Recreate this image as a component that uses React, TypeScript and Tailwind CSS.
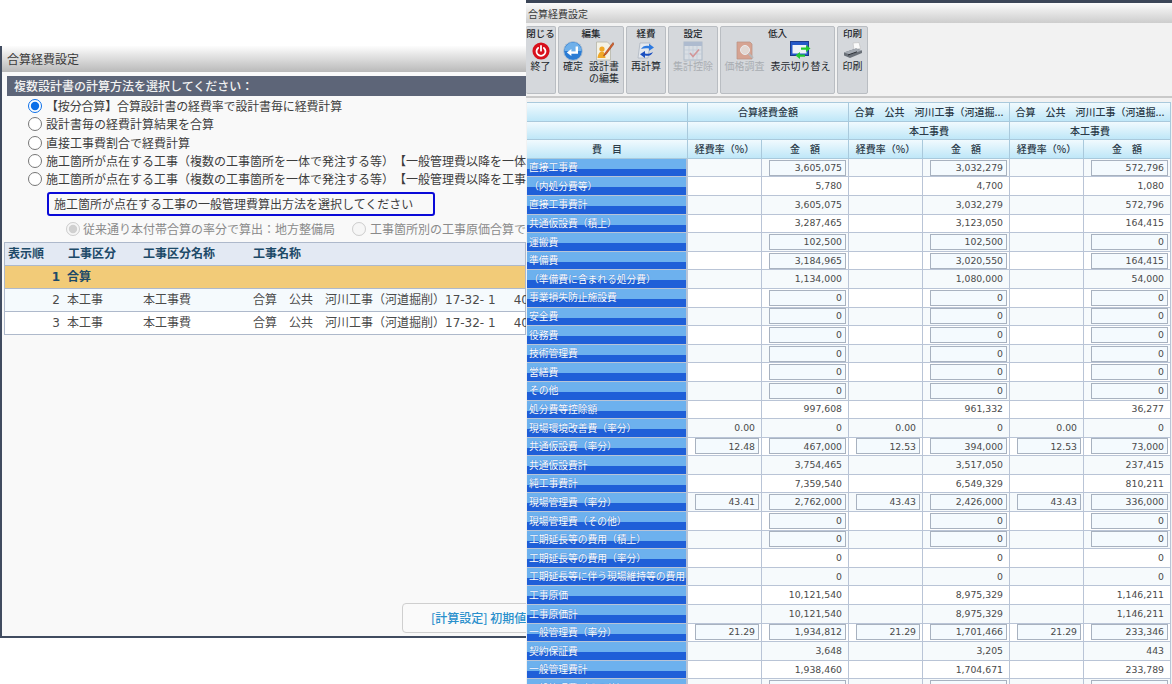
import React from 'react';

type Cell = { v: string; input?: boolean };
type Row = { label: string; cells: Cell[] };

const t = (v: string): Cell => ({ v });
const i = (v: string): Cell => ({ v, input: true });
const e: Cell = { v: '' };

const rows: Row[] = [
  { label: '直接工事費', cells: [e, i('3,605,075'), e, i('3,032,279'), e, i('572,796')] },
  { label: '\uFF08内処分費等\uFF09', cells: [e, t('5,780'), e, t('4,700'), e, t('1,080')] },
  { label: '直接工事費計', cells: [e, t('3,605,075'), e, t('3,032,279'), e, t('572,796')] },
  { label: '共通仮設費\uFF08積上\uFF09', cells: [e, t('3,287,465'), e, t('3,123,050'), e, t('164,415')] },
  { label: '運搬費', cells: [e, i('102,500'), e, i('102,500'), e, i('0')] },
  { label: '準備費', cells: [e, i('3,184,965'), e, i('3,020,550'), e, i('164,415')] },
  { label: '\uFF08準備費に含まれる処分費\uFF09', cells: [e, t('1,134,000'), e, t('1,080,000'), e, t('54,000')] },
  { label: '事業損失防止施設費', cells: [e, i('0'), e, i('0'), e, i('0')] },
  { label: '安全費', cells: [e, i('0'), e, i('0'), e, i('0')] },
  { label: '役務費', cells: [e, i('0'), e, i('0'), e, i('0')] },
  { label: '技術管理費', cells: [e, i('0'), e, i('0'), e, i('0')] },
  { label: '営繕費', cells: [e, i('0'), e, i('0'), e, i('0')] },
  { label: 'その他', cells: [e, i('0'), e, i('0'), e, i('0')] },
  { label: '処分費等控除額', cells: [e, t('997,608'), e, t('961,332'), e, t('36,277')] },
  { label: '現場環境改善費\uFF08率分\uFF09', cells: [t('0.00'), t('0'), t('0.00'), t('0'), t('0.00'), t('0')] },
  { label: '共通仮設費\uFF08率分\uFF09', cells: [i('12.48'), i('467,000'), i('12.53'), i('394,000'), i('12.53'), i('73,000')] },
  { label: '共通仮設費計', cells: [e, t('3,754,465'), e, t('3,517,050'), e, t('237,415')] },
  { label: '純工事費計', cells: [e, t('7,359,540'), e, t('6,549,329'), e, t('810,211')] },
  { label: '現場管理費\uFF08率分\uFF09', cells: [i('43.41'), i('2,762,000'), i('43.43'), i('2,426,000'), i('43.43'), i('336,000')] },
  { label: '現場管理費\uFF08その他\uFF09', cells: [e, i('0'), e, i('0'), e, i('0')] },
  { label: '工期延長等の費用\uFF08積上\uFF09', cells: [e, i('0'), e, i('0'), e, i('0')] },
  { label: '工期延長等の費用\uFF08率分\uFF09', cells: [e, t('0'), e, t('0'), e, t('0')] },
  { label: '工期延長等に伴う現場維持等の費用', cells: [e, t('0'), e, t('0'), e, t('0')] },
  { label: '工事原価', cells: [e, t('10,121,540'), e, t('8,975,329'), e, t('1,146,211')] },
  { label: '工事原価計', cells: [e, t('10,121,540'), e, t('8,975,329'), e, t('1,146,211')] },
  { label: '一般管理費\uFF08率分\uFF09', cells: [i('21.29'), i('1,934,812'), i('21.29'), i('1,701,466'), i('21.29'), i('233,346')] },
  { label: '契約保証費', cells: [e, t('3,648'), e, t('3,205'), e, t('443')] },
  { label: '一般管理費計', cells: [e, t('1,938,460'), e, t('1,704,671'), e, t('233,789')] },
  { label: '一般管理費\uFF08その他\uFF09', cells: [e, i('0'), e, i('0'), e, i('0')] },
];

const radios = [
  { text: '【按分合算】合算設計書の経費率で設計書毎に経費計算' },
  { text: '設計書毎の経費計算結果を合算' },
  { text: '直接工事費割合で経費計算' },
  { text: '施工箇所が点在する工事\uFF08複数の工事箇所を一体で発注する等\uFF09', note: '【一般管理費以降を一体' },
  { text: '施工箇所が点在する工事\uFF08複数の工事箇所を一体で発注する等\uFF09', note: '【一般管理費以降を工事' },
];

const koji = '合算\u3000公共\u3000河川工事\uFF08河道掘削\uFF0917-32- 1';
const kojiHead = '合算\u3000公共\u3000河川工事\uFF08河道掘...';

const PowerIcon = () => (
  <svg width="18" height="18" viewBox="0 0 20 20">
    <circle cx="10" cy="10" r="9.500" fill="#d8101c" />
    <path d="M6.800 6.600a5 5 0 1 0 6.400 0" fill="none" stroke="#fff" strokeWidth="2" strokeLinecap="round" />
    <path d="M10 4.400v5.200" stroke="#fff" strokeWidth="2" strokeLinecap="round" />
  </svg>
);

const EnterIcon = () => (
  <svg width="20" height="20" viewBox="0 0 20 20">
    <circle cx="10" cy="10" r="9.400" fill="#2a7bd4" stroke="#b8c4d0" strokeWidth="1" />
    <path d="M1.500 10a8.500 8.500 0 0 1 17 0z" fill="#6fb0ea" />
    <path d="M13.800 5.500v6H7.500" fill="none" stroke="#fff" strokeWidth="2.400" />
    <path d="M8.400 8v7l-4.600-3.500z" fill="#fff" />
  </svg>
);

const EditDocIcon = () => (
  <svg width="20" height="20" viewBox="0 0 20 20">
    <path d="M2.500 1h11l3 3v15h-14z" fill="#f4f2e6" stroke="#b5b5a8" strokeWidth="0.800" />
    <circle cx="8" cy="8" r="2.600" fill="#f0a828" />
    <path d="M3.500 17c.5-4.500 2.500-6.500 4.500-6.500s3 2 3.500 6.500z" fill="#f0a828" />
    <path d="M19 1.500 11 12l-1.500 3 2.800-1.800L20 3z" fill="#d8602a" stroke="#8a3a1a" strokeWidth="0.500" />
  </svg>
);

const RecalcIcon = () => (
  <svg width="20" height="20" viewBox="0 0 20 20">
    <path d="M4 2h10l-2 15H2z" fill="#e4e8ee" stroke="#a8b0bc" strokeWidth="0.700" />
    <path d="M5 8c1.500-3 5-4 8-3V2.800l5 3.700-5 3.200V7.500c-3-.7-5.500-.2-8 .5z" fill="#2e7ae0" />
    <path d="M17 11c-1.500 3.500-5 4.500-8 3.500V17l-5-3.700 5-3.200v2.400c3 .7 5.500.2 8-1.500z" fill="#1a4fc0" />
  </svg>
);

const CalendarIcon = () => (
  <svg width="20" height="20" viewBox="0 0 20 20" opacity="0.450">
    <rect x="1" y="1" width="18" height="18" fill="#dfe6ee" stroke="#7f96b0" strokeWidth="1" />
    <rect x="1" y="1" width="18" height="4" fill="#7f9ac0" />
    <path d="M1 9h18M1 13h18M6 5v14M10 5v14M14 5v14" stroke="#9fb4cc" strokeWidth="0.600" />
    <path d="M7 12l3 3.500 6-7" fill="none" stroke="#d04848" strokeWidth="1.600" />
  </svg>
);

const PriceIcon = () => (
  <svg width="20" height="20" viewBox="0 0 20 20" opacity="0.500">
    <path d="M2 1h13l2 2v15H2z" fill="#d8704a" stroke="#a04a2a" strokeWidth="0.700" />
    <circle cx="10" cy="9" r="4.500" fill="#f0d8cc" stroke="#fff" strokeWidth="1" />
    <path d="M13.500 12.500 18 17" stroke="#9a9a9a" strokeWidth="1.800" />
  </svg>
);

const SwitchIcon = () => (
  <svg width="21" height="20" viewBox="0 0 21 20">
    <rect x="0.500" y="0.500" width="18" height="14" fill="#2458c8" stroke="#1a3a8a" strokeWidth="1" />
    <rect x="2.500" y="4" width="14" height="8.500" fill="#eef2f8" />
    <path d="M11 6.500h5V4l4.500 3.500L16 11V8.800h-5z" fill="#22c832" />
    <path d="M15 13.500h-5V11l-4.500 3.500L10 18v-2.200h5z" fill="#22c832" />
  </svg>
);

const PrinterIcon = () => (
  <svg width="20" height="18" viewBox="0 0 20 18">
    <path d="M10 1l6-.5 1.500 6-6.500 1z" fill="#fafafa" stroke="#bdbdbd" strokeWidth="0.600" />
    <path d="M1 10.500 13 6.500l6 2v2.500L7 16l-6-2.500z" fill="#6a7078" />
    <path d="M1 10.500 13 6.500l6 2L7 12.500z" fill="#a4aab2" />
    <path d="M5 13l9-3.200" stroke="#2a2e34" strokeWidth="1" />
  </svg>
);

function ToolButton({ icon, label, disabled }: { icon: React.ReactNode; label: React.ReactNode; disabled?: boolean }) {
  return (
    <div className="flex flex-col items-center">
      <div className="h-[19px] flex items-center justify-center">{icon}</div>
      <div className={`text-[10px] leading-[12px] text-center whitespace-nowrap ${disabled ? 'text-[#a9adb2]' : 'text-[#23272c]'}`}>{label}</div>
    </div>
  );
}

function ToolGroup({ title, width, children, className }: { title: string; width: string; children: React.ReactNode; className?: string }) {
  return (
    <div className={`${width} h-[68px] shrink-0 bg-[#d5d8dc] border border-[#b9bdc2] rounded-[2px] flex flex-col items-center ${className ?? ''}`}>
      <div className="text-[9.5px] leading-[12px] h-[14px] font-medium text-[#23272c] whitespace-nowrap">{title}</div>
      <div className="flex justify-center gap-[6px]">{children}</div>
    </div>
  );
}

const headCell = 'border-r border-b border-[#a9c9dc] bg-[linear-gradient(#f1fafe,#bfe7f8)] flex items-center justify-center text-[10px] font-medium text-[#2a3a48] whitespace-nowrap overflow-hidden';

function DataCell({ cell, amount, shaded }: { cell: Cell; amount: boolean; shaded: boolean }) {
  return (
    <div className={`${amount ? 'w-[87px]' : 'w-[74px]'} h-full shrink-0 border-r border-b border-[#b9c4d6] ${shaded ? 'bg-[#f6fafc]' : 'bg-white'} flex items-center justify-end pl-[7px] pr-[2px] text-[9.3px] text-[#4a4a4a] font-['DejaVu_Sans',sans-serif]`}>
      {cell.input ? (
        <div className="w-full h-[16px] border border-[#a8b2c0] bg-[#f4fafe] flex items-center justify-end pr-[3px]">{cell.v}</div>
      ) : (
        <span className="pr-[4px]">{cell.v}</span>
      )}
    </div>
  );
}

export default function App() {
  return (
    <div className="relative w-[1172px] h-[684px] overflow-hidden bg-white font-['Noto_Sans_CJK_JP','Noto_Sans',sans-serif]">
      {/* left window */}
      <div className="absolute left-0 top-[46px] w-[526px] h-[592px] bg-[#f9f9f9] border-l-2 border-b-2 border-[#414c60] flex flex-col overflow-hidden">
        <div className="h-[26px] shrink-0 bg-[linear-gradient(#fdfdfd,#b9b9b9)] pl-[5px] flex items-center text-[12px] text-[#3a3a3a]">合算経費設定</div>
        <div className="mt-[4px] ml-[5px] h-[20px] shrink-0 bg-[#5d6578] pl-[7px] flex items-center text-[12px] font-medium text-[#f2f2f2] whitespace-nowrap">複数設計書の計算方法を選択してください：</div>
        <div className="mt-[1px] ml-[26px] flex flex-col">
          {radios.map((r, n) => (
            <label key={n} className={`h-[18.3px] flex items-center whitespace-nowrap text-[12px] text-[#3d3d3d] ${n === 0 ? 'tracking-[-0.16px]' : ''}`}>
              <input type="radio" name="calc" defaultChecked={n === 0} className="w-[14px] h-[14px] m-0 mr-[4px] shrink-0 accent-[#0b6fe8]" />
              <span className="shrink-0">{r.text}</span>
              {r.note && <span className="shrink-0">{r.note}</span>}
            </label>
          ))}
        </div>
        <div className="mt-[4px] ml-[45px] w-[388px] h-[24px] shrink-0 border-2 border-[#0a0ad8] rounded-[3px] pl-[5px] flex items-center text-[12px] text-[#3d3d3d] whitespace-nowrap">施工箇所が点在する工事の一般管理費算出方法を選択してください</div>
        <div className="mt-[3px] ml-[64px] h-[20px] shrink-0 flex items-center text-[12px] text-[#8a8a8a] whitespace-nowrap">
          <input type="radio" name="mgmt" disabled defaultChecked className="w-[14px] h-[14px] m-0 mr-[3px] shrink-0" />
          <span className="shrink-0">従来通り本付帯合算の率分で算出：地方整備局</span>
          <input type="radio" name="mgmt" disabled className="w-[14px] h-[14px] m-0 ml-[17px] mr-[4px] shrink-0" />
          <span className="shrink-0">工事箇所別の工事原価合算で算出</span>
        </div>
        <div className="mt-[3px] ml-[2px] border border-b-0 border-[#aeb9cb] font-['DejaVu_Sans','Noto_Sans_CJK_JP',sans-serif] text-[12px] whitespace-nowrap">
          <div className="h-[23px] bg-[#e3e9f3] border-b border-[#aeb9cb] flex items-center font-bold text-[#1d4a68]">
            <span className="w-[63px] shrink-0 pl-[3px]">表示順</span>
            <span className="w-[75px] shrink-0">工事区分</span>
            <span className="w-[110px] shrink-0">工事区分名称</span>
            <span className="shrink-0">工事名称</span>
          </div>
          <div className="h-[23px] bg-[#f2cb78] border-b border-[#aeb9cb] flex items-center font-bold text-[#1d4a68]">
            <span className="w-[55px] shrink-0 text-right">1</span>
            <span className="ml-[7px] shrink-0">合算</span>
          </div>
          {[2, 3].map((n) => (
            <div key={n} className={`h-[23px] border-b border-[#aeb9cb] flex items-center text-[#4a4a4a] ${n === 2 ? 'bg-[#f5fafd]' : 'bg-white'}`}>
              <span className="w-[55px] shrink-0 text-right">{n}</span>
              <span className="w-[76px] shrink-0 ml-[7px]">本工事</span>
              <span className="w-[110px] shrink-0">本工事費</span>
              <span className="shrink-0">{koji}</span>
              <span className="ml-[18px] shrink-0">40</span>
            </div>
          ))}
        </div>
        <div className="flex-1" />
        <div className="mb-[3px] ml-[400px] w-[200px] h-[30px] shrink-0 border border-[#cfcfcf] rounded-[4px] bg-[#fafafa] pl-[28px] flex items-center text-[12px] font-medium text-[#2a90cc] whitespace-nowrap">[計算設定] 初期値</div>
      </div>

      {/* right window */}
      <div className="absolute left-[526px] top-0 w-[646px] h-[684px] overflow-hidden bg-[#f2f2f2] flex flex-col">
        <div className="h-[3px] shrink-0 bg-[#3b4557]" />
        <div className="h-[20px] shrink-0 bg-[linear-gradient(#fbfbfb,#cdcdcd)] pl-[2px] flex items-center text-[10px] text-[#3a3a3a]">合算経費設定</div>
        <div className="h-[75px] shrink-0 pt-[3px] flex gap-[2px] border-b-2 border-[#c9c9c9]">
          <ToolGroup title="閉じる" width="w-[30px]" className="border-l-0">
            <ToolButton icon={<PowerIcon />} label="終了" />
          </ToolGroup>
          <ToolGroup title="編集" width="w-[66px]">
            <ToolButton icon={<EnterIcon />} label="確定" />
            <ToolButton icon={<EditDocIcon />} label={<>設計書<br />の編集</>} />
          </ToolGroup>
          <ToolGroup title="経費" width="w-[40px]">
            <ToolButton icon={<RecalcIcon />} label="再計算" />
          </ToolGroup>
          <ToolGroup title="設定" width="w-[50px]">
            <ToolButton icon={<CalendarIcon />} label="集計控除" disabled />
          </ToolGroup>
          <ToolGroup title="低入" width="w-[115px]">
            <ToolButton icon={<PriceIcon />} label="価格調査" disabled />
            <ToolButton icon={<SwitchIcon />} label="表示切り替え" />
          </ToolGroup>
          <ToolGroup title="印刷" width="w-[31px]">
            <ToolButton icon={<PrinterIcon />} label="印刷" />
          </ToolGroup>
        </div>

        <div className="mt-[4px] ml-[1px] w-[644px] flex flex-col border-t border-[#a9c9dc]">
          <div className="h-[18.6px] flex shrink-0">
            <div className={`w-[161px] ${headCell}`} />
            <div className={`w-[161px] ${headCell}`}>合算経費金額</div>
            <div className={`w-[161px] ${headCell}`}>{kojiHead}</div>
            <div className={`w-[161px] ${headCell}`}>{kojiHead}</div>
          </div>
          <div className="h-[18.6px] flex shrink-0">
            <div className={`w-[161px] ${headCell}`} />
            <div className={`w-[161px] ${headCell}`} />
            <div className={`w-[161px] ${headCell}`}>本工事費</div>
            <div className={`w-[161px] ${headCell}`}>本工事費</div>
          </div>
          <div className="h-[18.6px] flex shrink-0">
            <div className={`w-[161px] ${headCell}`}>費{'\u3000'}目</div>
            {[0, 1, 2].map((n) => (
              <React.Fragment key={n}>
                <div className={`w-[74px] ${headCell}`}>経費率{'\uFF08'}%{'\uFF09'}</div>
                <div className={`w-[87px] ${headCell}`}>金{'\u3000'}額</div>
              </React.Fragment>
            ))}
          </div>
          {rows.map((r, n) => (
            <div key={r.label} className="h-[18.6px] flex shrink-0">
              <div className="w-[161px] shrink-0 h-full border-r-2 border-b border-[#b9c4d6] bg-[linear-gradient(#6db1ee_0,#6db1ee_58%,#1f5fd8_58%,#1f5fd8_100%)] pl-[2px] flex items-center text-[9.750px] text-white whitespace-nowrap overflow-hidden [text-shadow:0_0_1px_#2a5fc0]">
                {r.label}
              </div>
              {r.cells.map((c, k) => (
                <DataCell key={k} cell={c} amount={k % 2 === 1} shaded={n % 2 === 0} />
              ))}
            </div>
          ))}
        </div>
      </div>
    </div>
  );
}
